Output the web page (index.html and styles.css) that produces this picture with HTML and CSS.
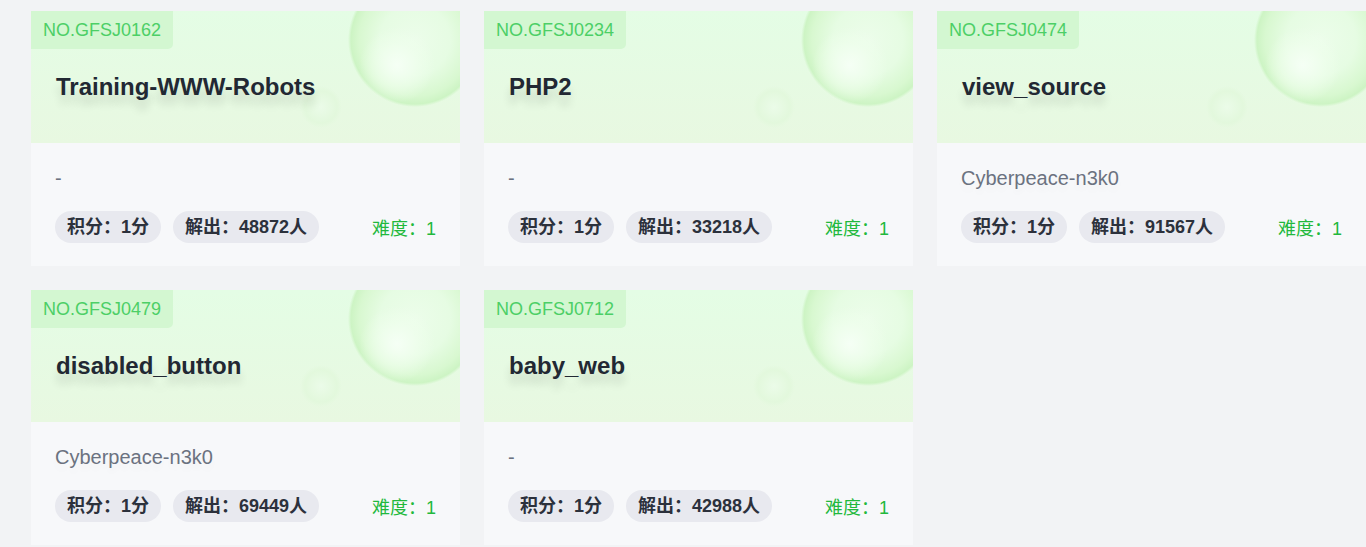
FILE: index.html
```html
<!DOCTYPE html>
<html lang="zh">
<head>
<meta charset="utf-8">
<link rel="stylesheet" href="styles.css">
</head>
<body>
<div class="grid">
  <div class="card">
    <div class="head"><span class="tag">NO.GFSJ0162</span><h3 class="title">Training-WWW-Robots</h3></div>
    <div class="body">
      <div class="author">-</div>
      <div class="meta"><span class="pill">积分：1分</span><span class="pill">解出：48872人</span><span class="diff">难度：1</span></div>
    </div>
  </div>
  <div class="card">
    <div class="head"><span class="tag">NO.GFSJ0234</span><h3 class="title">PHP2</h3></div>
    <div class="body">
      <div class="author">-</div>
      <div class="meta"><span class="pill">积分：1分</span><span class="pill">解出：33218人</span><span class="diff">难度：1</span></div>
    </div>
  </div>
  <div class="card">
    <div class="head"><span class="tag">NO.GFSJ0474</span><h3 class="title">view_source</h3></div>
    <div class="body">
      <div class="author">Cyberpeace-n3k0</div>
      <div class="meta"><span class="pill">积分：1分</span><span class="pill">解出：91567人</span><span class="diff">难度：1</span></div>
    </div>
  </div>
  <div class="card">
    <div class="head"><span class="tag">NO.GFSJ0479</span><h3 class="title">disabled_button</h3></div>
    <div class="body">
      <div class="author">Cyberpeace-n3k0</div>
      <div class="meta"><span class="pill">积分：1分</span><span class="pill">解出：69449人</span><span class="diff">难度：1</span></div>
    </div>
  </div>
  <div class="card">
    <div class="head"><span class="tag">NO.GFSJ0712</span><h3 class="title">baby_web</h3></div>
    <div class="body">
      <div class="author">-</div>
      <div class="meta"><span class="pill">积分：1分</span><span class="pill">解出：42988人</span><span class="diff">难度：1</span></div>
    </div>
  </div>
</div>
</body>
</html>
```
FILE: styles.css
```css
html, body {
  margin: 0;
  padding: 0;
  background: #f2f3f5;
  overflow: hidden;
}
body {
  font-family: "Liberation Sans", Arial, "Noto Sans CJK SC", sans-serif;
  width: 1366px;
  height: 547px;
}
.grid {
  display: grid;
  grid-template-columns: repeat(3, 429px);
  column-gap: 24px;
  row-gap: 24px;
  padding: 11px 0 0 31px;
}
.card {
  height: 255px;
  display: flex;
  flex-direction: column;
  background: #f7f8fa;
}
.head {
  height: 132px;
  flex: none;
  background:
    radial-gradient(circle 38px at 366px 54px, rgba(246,255,246,0.95) 0, rgba(240,255,238,0.6) 22px, rgba(240,255,238,0) 38px),
    radial-gradient(circle 67px at 384px 29px, #ecfdea 0, #e6fce3 35px, #d8f8d0 56px, #cdf4c4 64px, rgba(215,247,208,0) 67px),
    radial-gradient(circle 21px at 290px 96px, rgba(236,252,234,0.8) 0, rgba(226,248,220,0.9) 16px, rgba(226,248,220,0) 21px),
    linear-gradient(180deg, #e4fde5 0%, #e8f8e1 100%);
  background-repeat: no-repeat;
}
.tag {
  display: inline-block;
  height: 38px;
  line-height: 38px;
  padding: 0 12px 0 12px;
  font-size: 18px;
  color: #4ccf66;
  background: #d3f7d1;
  border-bottom-right-radius: 5px;
}
.title {
  margin: 23px 0 0 25px;
  font-size: 24px;
  line-height: 30px;
  font-weight: 700;
  color: #222833;
  text-shadow: 0 10px 9px rgba(0, 0, 0, 0.12);
}
.body {
  flex: 1;
  padding: 22px 24px 0 24px;
  display: flex;
  flex-direction: column;
}
.author {
  font-size: 20px;
  line-height: 26px;
  color: #6b7280;
  height: 26px;
  text-shadow: 0 6px 6px rgba(0, 0, 0, 0.03);
}
.meta {
  display: flex;
  align-items: center;
  gap: 12px;
  margin-top: 20px;
}
.pill {
  height: 32px;
  line-height: 32px;
  padding: 0 12px;
  border-radius: 16px;
  background: #e8e9ef;
  color: #2c313c;
  font-size: 18px;
  font-weight: 700;
}
.diff {
  margin-left: auto;
  color: #22b83c;
  font-size: 18px;
}
```
